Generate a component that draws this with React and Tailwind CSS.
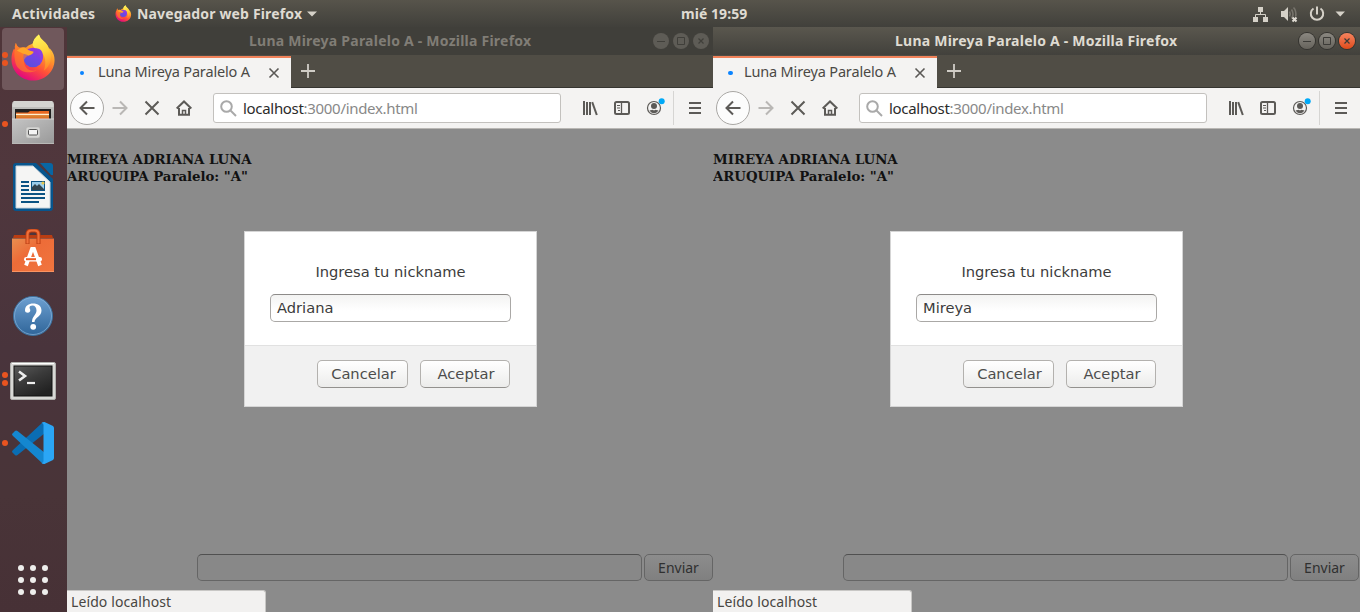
import React from "react";

const Dots = ({ n }) => (
  <div className="flex w-[9px] flex-col items-center gap-[2px]">
    {Array.from({ length: n }).map((_, i) => (
      <span key={i} className="h-[6px] w-[6px] rounded-full bg-[#e95420]" />
    ))}
  </div>
);

function FirefoxLogo({ size, id }) {
  return (
    <svg width={size} height={size} viewBox="0 0 46 48" className="block shrink-0">
      <defs>
        <linearGradient id={id + "a"} x1="0.85" y1="0.1" x2="0.35" y2="1">
          <stop offset="0" stopColor="#ffe04a" />
          <stop offset="0.35" stopColor="#ff9a2b" />
          <stop offset="0.65" stopColor="#ff5038" />
          <stop offset="1" stopColor="#e2087e" />
        </linearGradient>
        <linearGradient id={id + "b"} x1="0.8" y1="0" x2="0.3" y2="1">
          <stop offset="0" stopColor="#a52ee0" />
          <stop offset="0.5" stopColor="#7145e6" />
          <stop offset="1" stopColor="#5a4fdc" />
        </linearGradient>
        <linearGradient id={id + "c"} x1="0.4" y1="0" x2="0.6" y2="1">
          <stop offset="0" stopColor="#fff45c" />
          <stop offset="0.5" stopColor="#ffd23a" />
          <stop offset="1" stopColor="#ff8228" />
        </linearGradient>
      </defs>
      <path d="M5 9q1 4 4 5 3-1 6 0 3-3 7-4 2-6 6.500-9.500 1 4 5 7 4 3 5 8l1-1c4 4 5 8 5 12 0 12-10 21-22 21S.500 38 .500 26c0-5 1-8 2.500-11l1 1Q3.500 12 5 9z" fill={`url(#${id}a)`} />
      <path d="M22 11q1-7 6.500-10.500 1 4 5 7 4 3 6 9c3 8 1 16-6 21 3-8 2-16-4-20q-6-2-7.500-6.500z" fill={`url(#${id}c)`} />
      <circle cx="22.500" cy="24" r="10" fill={`url(#${id}b)`} />
      <path d="M4 16Q3.500 12 5 9q1 4 4 5 3-1 6 0 2 3 8 4 0 2-5 4-3 1-4.500 4c-1 8 5 13 13 11-9 5-20 1-22-8C3.500 24 3 20 4 16z" fill="#ff8426" opacity="0.6" />
      <path d="M6 17q4-4 9-3 2 3 8 4 0 2-5 4-2-1-6-2-3-2-6-3z" fill="#ffa62b" />
      <path d="M25 15q5-1 7 4 2 6-2 11 1-9-5-15z" fill="#8a3fe4" />
    </svg>
  );
}

function FilesIcon() {
  return (
    <svg width="46" height="48" viewBox="0 0 46 48">
      <defs>
        <linearGradient id="fg" x2="0" y2="1"><stop stopColor="#c8c8c5" /><stop offset="1" stopColor="#858585" /></linearGradient>
        <linearGradient id="ff" x2="1" y2="1"><stop stopColor="#c4c4c4" /><stop offset="1" stopColor="#999" /></linearGradient>
      </defs>
      <path d="M2 4q0-2 2-3h38q2 1 2 3v40H2z" fill="url(#fg)" />
      <path d="M2.500 5L4 1h38l1.500 4v2h-41z" fill="#d4d4d1" />
      <rect x="5" y="9" width="36" height="10" fill="#202020" />
      <path d="M6 12.500h12l2-1.500h19v8H6z" fill="#e96820" />
      <path d="M6 14.500h33" stroke="#fff0ce" strokeWidth="1.300" />
      <path d="M6 16.500h33" stroke="#d6822f" strokeWidth="2" />
      <rect x="2" y="19" width="42" height="25" fill="url(#ff)" />
      <path d="M2 19h42" stroke="#d2d2d2" />
      <path d="M2 43.500h42" stroke="#b9b9b7" />
      <rect x="16" y="27" width="14" height="11" rx="2" fill="#d6d6d4" stroke="#b0b0ae" strokeWidth="0.600" />
      <rect x="18.500" y="29.500" width="9" height="5.500" rx="1" fill="#f4f4f4" stroke="#555" />
    </svg>
  );
}

function WriterIcon() {
  return (
    <svg width="42" height="48" viewBox="0 0 42 48">
      <path d="M4 0h20l17 16v29q0 3-3 3H4q-3 0-3-3V3q0-3 3-3z" fill="#07558d" />
      <path d="M4 3h17l17 16v26H4z" fill="#f5f5f4" stroke="#c9d3da" strokeWidth="1" />
      <path d="M28 0h10q3 0 3 3v9h-2z" fill="#0866a3" />
      <path d="M9 19h8M9 23h8M9 27h8M9 31h24M9 35h24M9 39h18" stroke="#0b5383" strokeWidth="2" />
      <rect x="19.500" y="18.500" width="13" height="9" fill="#9bcdea" stroke="#0b5383" />
      <circle cx="31" cy="20" r="1.600" fill="#e8c64b" />
      <path d="M20 27v-3l3-3 2 2 2-2 5 5v1z" fill="#33444e" />
    </svg>
  );
}

function SoftwareIcon() {
  return (
    <svg width="44" height="46" viewBox="0 0 44 46">
      <defs><linearGradient id="sw" x2="1" y2="1"><stop stopColor="#e98f50" /><stop offset="0.4" stopColor="#ed6c38" /><stop offset="1" stopColor="#f1753f" /></linearGradient></defs>
      <path d="M2 9l1-3h38l1 3z" fill="#b93d12" />
      <path d="M1 9.500h42V43H1z" fill="url(#sw)" />
      <path d="M1 42.500h42" stroke="#f99462" />
      <path d="M16.500 15V5.500q0-4 4-4h3q4 0 4 4V15" fill="none" stroke="#b83c12" strokeWidth="4" />
      <path d="M16.500 14.500V5.500q0-4 4-4h3q4 0 4 4v9" fill="none" stroke="#f0703a" strokeWidth="2.200" />
      <path d="M15 36.500L21 20h2l6 16.500" fill="none" stroke="#fff" strokeWidth="3.800" />
      <rect x="13" y="28" width="18" height="4.500" rx="2.200" fill="#fff" />
      <path d="M15 30.200h10" stroke="#ed5b25" strokeWidth="2" />
    </svg>
  );
}

function HelpIcon() {
  return (
    <svg width="42" height="42" viewBox="0 0 42 42">
      <defs><linearGradient id="hp" x2="0" y2="1"><stop stopColor="#6da0d1" /><stop offset="1" stopColor="#2f6599" /></linearGradient></defs>
      <circle cx="21" cy="21" r="19.500" fill="url(#hp)" stroke="#3c719f" />
      <circle cx="21" cy="21" r="18.500" fill="none" stroke="#8ab3da" strokeWidth="0.700" />
      <path d="M13 15.500C13 10.500 17 8.500 21 8.500c5 0 8.500 2.500 8.500 7 0 6-6.500 6.500-7 11.500H20c0-6 4.500-7 4.500-11.500 0-3-1.500-5-4-5-2 0-3 .8-3 2 0 1 .8 1.500.8 2.800 0 1.500-1.100 2.500-2.500 2.500-1.500 0-2.800-1-2.800-2.300z" fill="#fff" />
      <circle cx="21.200" cy="31.800" r="2.900" fill="#fff" />
    </svg>
  );
}

function TerminalIcon() {
  return (
    <svg width="46" height="38" viewBox="0 0 46 38">
      <defs><linearGradient id="tm" x2="0.6" y2="1"><stop stopColor="#5a5a5a" /><stop offset="0.5" stopColor="#3a3a3a" /><stop offset="1" stopColor="#222" /></linearGradient></defs>
      <rect x="0.500" y="0.500" width="45" height="37" rx="1.500" fill="#d8d8d5" stroke="#b0b0ad" />
      <path d="M2 1.500h42" stroke="#fff" />
      <rect x="4" y="4" width="38" height="30" fill="url(#tm)" stroke="#111" />
      <path d="M9 9.500l6 4.500-6 4.500" fill="none" stroke="#eee" strokeWidth="2.600" />
      <path d="M17 21h8" stroke="#eee" strokeWidth="2.200" />
    </svg>
  );
}

function CodeIcon() {
  return (
    <svg width="42" height="44" viewBox="0 0 42 44">
      <path d="M0 31l3 3q1 1 2.500 0L33 12V1q-2 0-3 1L1 29q-1 1-1 2z" fill="#0a6db3" />
      <path d="M0 13l3-3q1-1 2.500 0L33 32v11q-2 0-3-1L1 15q-1-1-1-2z" fill="#1487d0" />
      <path d="M29.500 42q1 1 3 1L41 39q1-1 1-2V7q0-1-1-2L32.500 1q-2 0-3 1 2 0 2 2v36q0 2-2 2z" fill="#2ba6f5" />
    </svg>
  );
}

function Dock() {
  return (
    <nav className="flex h-[585px] w-[67px] shrink-0 flex-col bg-[linear-gradient(180deg,#4f3539_0%,#50373d_25%,#49343c_55%,#493438_80%,#473136_100%)]">
      <div className="mt-px ml-[2px] flex h-[62px] w-[62px] items-center rounded-[4px] bg-[#70585c]">
        <div className="-ml-[2px] flex w-[10px]"><Dots n={2} /></div>
        <div className="-mt-[3px]"><FirefoxLogo size={47} id="dock" /></div>
      </div>
      <div className="mt-[10px] flex h-[48px] items-center">
        <Dots n={1} /><div className="ml-[1px]"><FilesIcon /></div>
      </div>
      <div className="mt-[15px] flex h-[48px] items-center pl-[12px]"><WriterIcon /></div>
      <div className="mt-[18px] flex h-[46px] items-center pl-[11px]"><SoftwareIcon /></div>
      <div className="mt-[20px] flex h-[42px] items-center pl-[12px]"><HelpIcon /></div>
      <div className="mt-[25px] flex h-[38px] items-center">
        <div className="-mt-[4px]"><Dots n={2} /></div><div className="ml-[1px]"><TerminalIcon /></div>
      </div>
      <div className="mt-[21px] flex h-[44px] items-center">
        <Dots n={1} /><div className="ml-[3px]"><CodeIcon /></div>
      </div>
      <div className="mt-[100px] ml-[18px] grid w-[30px] grid-cols-3 gap-[6px]">
        {Array.from({ length: 9 }).map((_, i) => (
          <span key={i} className="h-[6px] w-[6px] rounded-full bg-[#eeeeec]" />
        ))}
      </div>
    </nav>
  );
}

function TopBar() {
  return (
    <header className="flex h-[27px] shrink-0 items-center bg-linear-to-b from-[#57544b] to-[#41403b] text-[14px] font-bold text-[#dfdbd2]">
      <div className="flex w-[681px] items-center">
        <span className="ml-[12px] w-[103px] tracking-[0.22px] whitespace-nowrap">Actividades</span>
        <FirefoxLogo size={17} id="bar" />
        <span className="ml-[5px] w-[170px] tracking-[0.16px] whitespace-nowrap">Navegador web Firefox</span>
        <svg width="10" height="6" viewBox="0 0 10 6"><path d="M0 .5h10L5 5.500z" fill="#d5d1c8" /></svg>
      </div>
      <span className="-mt-px w-[572px] text-[14px] tracking-[0.05px]">mié 19:59</span>
      <svg width="96" height="20" viewBox="0 0 96 20" fill="#d5d1c8">
        <path d="M5 3h5v5H5zM0 13h5v5H0zM10 13h5v5h-5z" />
        <path d="M7.500 7v3.500M2.500 14v-3.500h10V14" fill="none" stroke="#d5d1c8" />
        <path d="M28 7h3l4-4v14l-4-4h-3z" />
        <path d="M36.500 7.500q1.500 2.500 0 5M38.500 5.500q3 4.500 0 9M40.500 3.500q3 3 2.200 9" fill="none" stroke="#77746c" strokeWidth="1.600" />
        <path d="M39.500 13.500l4 4M43.500 13.500l-4 4" stroke="#e0dcd4" strokeWidth="2" />
        <path d="M60.500 4.500a6.200 6.200 0 1 0 7 0M64 2.500v8" fill="none" stroke="#d5d1c8" strokeWidth="2" />
        <path d="M82.500 7.500h9.500l-4.750 5z" />
      </svg>
    </header>
  );
}

function WindowButtons({ active }) {
  const base = active
    ? "flex h-[16px] w-[16px] items-center justify-center rounded-full bg-linear-to-b from-[#8b8881] to-[#66635c] shadow-[0_0_0_1px_#34332f]"
    : "flex h-[16px] w-[16px] items-center justify-center rounded-full bg-[#5e5c56]";
  const close = active
    ? "flex h-[16px] w-[16px] items-center justify-center rounded-full bg-linear-to-b from-[#f5835d] to-[#df4a16] shadow-[0_0_0_1px_#34332f]"
    : base;
  const ink = active ? "#3c3b37" : "#403f3a";
  return (
    <div className="flex gap-[4px]">
      <span className={base}><svg width="10" height="10"><path d="M1 5.500h8" stroke={ink} /></svg></span>
      <span className={base}><svg width="10" height="10"><path d="M1.500 1.500h7v7h-7z" fill="none" stroke={ink} /></svg></span>
      <span className={close}><svg width="10" height="10"><path d="M2.500 2.500l5 5M7.500 2.500l-5 5" stroke={ink} strokeWidth="1.200" /></svg></span>
    </div>
  );
}

function Toolbar() {
  const s = { fill: "none", stroke: "#5c5a57", strokeWidth: 2 };
  return (
    <div className="flex h-[41px] shrink-0 items-center border-b border-[#b9b7b4] bg-[#f4f3f2]">
      <div className="ml-[3px] flex h-[34px] w-[34px] items-center justify-center rounded-full border border-[#a9a7a4] bg-[#fcfcfc]">
        <svg width="16" height="16" {...s}><path d="M15.500 8H1.500M8 1.500L1.500 8 8 14.500" /></svg>
      </div>
      <svg className="ml-[8px]" width="16" height="16" {...s} stroke="#b9b7b5"><path d="M.5 8h14M8 1.500L14.500 8 8 14.500" /></svg>
      <svg className="ml-[16px]" width="16" height="16" {...s}><path d="M1.500 1.500l13 13M14.500 1.500l-13 13" /></svg>
      <svg className="ml-[16px]" width="16" height="16" {...s}><path d="M.7 8.500L8 1.500l7.300 7M3 8v6.800h10V8" /><path d="M6.500 15v-4.500h3V15" strokeWidth="1.500" /></svg>
      <div className="ml-[21px] flex h-[30px] w-[348px] items-center rounded-[3px] border border-[#c3c1be] bg-white">
        <svg className="ml-[6px]" width="17" height="17" fill="none" stroke="#a9a9a9" strokeWidth="2"><circle cx="6.500" cy="6.500" r="5.300" /><path d="M10.500 10.500l5.500 5.500" /></svg>
        <span className="ml-[6px] text-[15px] tracking-[-0.31px] whitespace-nowrap text-[#2b2b2b]">localhost<span className="text-[#888]">:3000/index.html</span></span>
      </div>
      <svg className="ml-[21px]" width="16" height="16" {...s}><path d="M2 1v14M5 2v13M8 2v13" /><path d="M10.200 2.200L14.800 15" /></svg>
      <svg className="ml-[16px]" width="16" height="16" {...s}><rect x="1" y="2" width="14" height="12" rx="1.500" /><path d="M7.500 2v12" strokeWidth="1.300" /><path d="M3 5.500h3M3 8h3M4 10.500h2" strokeWidth="1" /></svg>
      <svg className="ml-[16px] -mt-[2px]" width="20" height="20" fill="#5c5a57">
        <circle cx="8" cy="11" r="6.500" fill="none" stroke="#5c5a57" strokeWidth="1.200" /><circle cx="8" cy="9" r="3" /><path d="M3.500 13.200q2 .3 3-.4 1.500 1 3 0 1 .7 3 .4-1.500 3-4.500 3t-4.500-3z" />
        <circle cx="15.700" cy="4.200" r="3" fill="#00a9f7" />
      </svg>
      <span className="ml-[7px] h-[34px] w-px bg-[#d6d5d3]" />
      <svg className="ml-[15px]" width="12" height="14" {...s}><path d="M0 2h12M0 7h12M0 12h12" /></svg>
    </div>
  );
}

function Dialog({ nickname }) {
  const button = "h-[28px] rounded-[5px] border border-[#b3b1ae] border-b-[#93918e] bg-linear-to-b from-white to-[#ececeb] pl-[2px] pb-px text-[14.670px] leading-[25px] text-[#4c4c4c]";
  return (
    <section className="ml-[177px] flex h-[176px] w-[293px] shrink-0 flex-col border border-[#d5d5d5] bg-white font-['DejaVu_Sans',sans-serif] text-[14.670px] text-[#3c3c3c]">
      <div className="flex h-[113px] flex-col items-center pt-[31px]">
        <p className="h-[18px] leading-[18px]">Ingresa tu nickname</p>
        <div className="mt-[13px] h-[28px] w-[241px] rounded-[5px] border border-[#aaa8a6] border-t-[#8d8b89] bg-linear-to-b from-[#f3f3f2] to-white to-60% pl-[6px] leading-[26px]">{nickname}</div>
      </div>
      <div className="flex flex-1 justify-end gap-[12px] border-t border-[#e1e1e1] bg-[#f1f1f1] pt-[14px] pr-[26px]">
        <button className={button + " w-[91px]"}>Cancelar</button>
        <button className={button + " w-[90px]"}>Aceptar</button>
      </div>
    </section>
  );
}

function BrowserWindow({ active, nickname, className }) {
  return (
    <div className={"flex h-[585px] shrink-0 flex-col overflow-hidden " + className}>
      <div className={"flex h-[28px] shrink-0 items-center text-[14px] font-bold " + (active ? "bg-linear-to-b from-[#5a574e] to-[#42413c] text-[#dfdbd2]" : "bg-[#403f3a] text-[#807d76]")}>
        <span className="-mt-[2px] ml-[182px] w-[404px] tracking-[0.235px] whitespace-nowrap">Luna Mireya Paralelo A - Mozilla Firefox</span>
        <WindowButtons active={active} />
      </div>
      <div className="flex h-[33px] shrink-0 border-b border-[#363530] bg-[#504d45]">
        <div className="mt-px flex h-[32px] w-[224px] items-center border-t-2 border-[#f0825a] bg-[#f4f3f2] pb-px">
          <span className={active ? "ml-[15px] h-[4px] w-[5px] rounded-full bg-[#0a84ff]" : "ml-[13px] mr-[2px] h-[4px] w-[4px] rounded-full bg-[#0a84ff]"} />
          <span className={"-mt-px w-[170px] text-[14.500px] tracking-[-0.16px] whitespace-nowrap text-[#4b4945] " + (active ? "ml-[11px]" : "ml-[12px]")}>Luna Mireya Paralelo A</span>
          <svg width="12" height="12" fill="none" stroke="#5b5956" strokeWidth="1.600"><path d="M1.500 1.500l9 9M10.500 1.500l-9 9" /></svg>
        </div>
        <svg className="mt-[8px] ml-[9px]" width="16" height="16" stroke="#d0cdc6" strokeWidth="1.800"><path d="M8 1v14M1 8h14" /></svg>
      </div>
      <Toolbar />
      <main className="relative flex flex-1 flex-col bg-[#8b8b8b]">
        <h4 className="mt-[22px] h-[80px] w-[240px] font-['DejaVu_Serif',serif] text-[13.330px] leading-[17px] font-bold tracking-[-0.04px] text-[#111]">MIREYA ADRIANA LUNA<br />ARUQUIPA Paralelo: "A"</h4>
        <Dialog nickname={nickname} />
        <div className="mt-[147px] ml-[130px] flex gap-[2px]">
          <div className="h-[27px] w-[445px] rounded-[5px] border border-[#656565] border-t-[#505050] bg-[#888]" />
          <div className="h-[27px] w-[69px] rounded-[5px] border border-[#656565] bg-linear-to-b from-[#8c8c8c] to-[#808080] text-center text-[14px] leading-[25px] text-[#303030]">Enviar</div>
        </div>
        <div className="absolute bottom-0 left-0 h-[22px] w-[199px] rounded-tr-[3px] border-t border-r border-[#c8c7c5] bg-[#f2f1f0] pl-[4px] text-[14px] leading-[21px] tracking-[0.1px] text-[#484642]">Leído localhost</div>
      </main>
    </div>
  );
}

export default function App() {
  return (
    <div className="flex h-[612px] w-[1360px] flex-col overflow-hidden bg-[#3c3b37] font-['Noto_Sans',sans-serif]">
      <TopBar />
      <div className="flex">
        <Dock />
        <BrowserWindow nickname="Adriana" className="w-[646px]" />
        <BrowserWindow active nickname="Mireya" className="w-[647px]" />
      </div>
    </div>
  );
}
